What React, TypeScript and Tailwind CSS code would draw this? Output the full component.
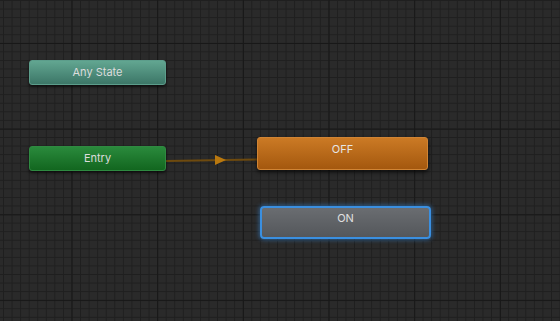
export default function App() {
  return (
    <main className="relative w-[560px] h-[321px] overflow-hidden bg-[#2a2a2a] font-['Inter','Liberation_Sans',sans-serif] bg-[linear-gradient(to_right,#181818_1px,transparent_1px),linear-gradient(to_bottom,#181818_1px,transparent_1px),linear-gradient(to_right,#1f1f1f_1px,transparent_1px),linear-gradient(to_bottom,#1f1f1f_1px,transparent_1px)] [background-size:85.7px_85.7px,85.7px_85.7px,8.57px_8.57px,8.57px_8.57px] [background-position:71.5px_43px,71.5px_43px,3px_0px,3px_0px]">
      {/* Transition: Entry -> OFF */}
      <svg className="absolute inset-0" width="560" height="321">
        <line x1="166" y1="161" x2="257" y2="159.5" stroke="#6e4a0e" strokeWidth="2" />
        <polygon points="215,155 226,160 215,165" fill="#b9780f" />
      </svg>

      {/* Any State */}
      <div className="absolute left-[29px] top-[60px] w-[137px] h-[25px] rounded-[3px] border border-[#5c9d8b] bg-[linear-gradient(to_bottom,#62a691,#3c7667)] shadow-[0_2px_3px_rgba(0,0,0,0.6)] flex items-center justify-center text-[11px] text-[#dcdcdc]">
        Any State
      </div>

      {/* Entry */}
      <div className="absolute left-[29px] top-[146px] w-[137px] h-[25px] rounded-[3px] border border-[#2f8a41] bg-[linear-gradient(to_bottom,#2a8a3c,#12661f)] shadow-[0_2px_3px_rgba(0,0,0,0.6)] flex items-center justify-center text-[11px] text-[#dcdcdc]">
        Entry
      </div>

      {/* OFF (default state) */}
      <div className="absolute left-[257px] top-[137px] w-[171px] h-[33px] rounded-[3px] border border-[#d08434] bg-[linear-gradient(to_bottom,#cb7a25,#a4580e)] shadow-[0_2px_4px_rgba(0,0,0,0.7)] flex justify-center pt-[3px] text-[11px] text-[#e6e6e6]">
        OFF
      </div>

      {/* ON (selected) */}
      <div className="absolute left-[260px] top-[206px] w-[171px] h-[33px] rounded-[4px] border-2 border-[#3a8fe0] bg-[linear-gradient(to_bottom,#6a6d71,#54575b)] shadow-[0_0_4px_1px_rgba(60,150,240,0.5)] flex justify-center pt-[2px] text-[11px] text-[#e0e0e0]">
        ON
      </div>
    </main>
  );
}
